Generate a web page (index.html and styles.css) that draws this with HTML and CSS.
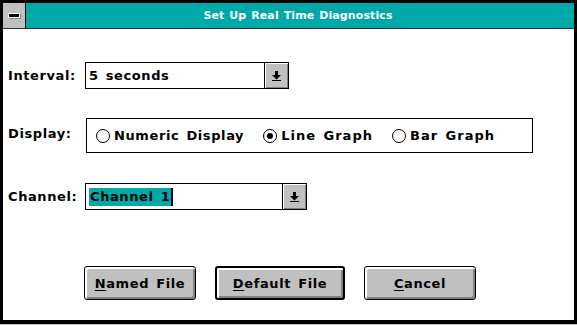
FILE: index.html
```html
<!DOCTYPE html>
<html>
<head>
<meta charset="utf-8">
<link rel="stylesheet" href="styles.css">
</head>
<body>
<div class="window">
  <div class="titlebar">
    <div class="sysbox"><span class="sysbar"></span></div>
    <div class="title">Set Up Real Time Diagnostics</div>
  </div>
  <div class="client">
    <div class="row row-interval">
      <span class="label">Interval:</span>
      <div class="combo combo-interval">
        <span class="combo-text">5 seconds</span>
        <span class="drop">
          <svg width="9" height="10" viewBox="0 0 9 10"><path d="M3 0h3v4h3L4.5 8.5 0 4h3z" fill="#000"/><rect x="0" y="9" width="9" height="1" fill="#000"/></svg>
        </span>
      </div>
    </div>
    <div class="row row-display">
      <span class="label">Display:</span>
      <div class="group">
        <span class="radio"><span class="circle"></span>Numeric Display</span>
        <span class="radio"><span class="circle on"></span>Line Graph</span>
        <span class="radio"><span class="circle"></span>Bar Graph</span>
      </div>
    </div>
    <div class="row row-channel">
      <span class="label">Channel:</span>
      <div class="combo combo-channel">
        <span class="combo-text"><span class="sel">Channel 1</span><span class="caret"></span></span>
        <span class="drop">
          <svg width="9" height="10" viewBox="0 0 9 10"><path d="M3 0h3v4h3L4.5 8.5 0 4h3z" fill="#000"/><rect x="0" y="9" width="9" height="1" fill="#000"/></svg>
        </span>
      </div>
    </div>
    <div class="buttons">
      <div class="btn btn-named"><span><u>N</u>amed File</span></div>
      <div class="btn btn-default"><span><u>D</u>efault File</span></div>
      <div class="btn btn-cancel"><span><u>C</u>ancel</span></div>
    </div>
  </div>
</div>
</body>
</html>
```
FILE: styles.css
```css
html, body {
  margin: 0;
  padding: 0;
  background: #c0c0c0;
}
body {
  width: 577px;
  height: 325px;
  overflow: hidden;
  font-family: "DejaVu Sans", sans-serif;
  font-weight: bold;
  font-size: 13px;
  letter-spacing: 0.6px;
  word-spacing: 2px;
  color: #000;
}
.window {
  width: 571px;
  height: 317px;
  border: 3px solid #000;
  border-bottom-width: 4px;
  border-right-width: 4px;
  background: #fff;
  display: flex;
  flex-direction: column;
}
.titlebar {
  height: 25px;
  display: flex;
  border-bottom: 1px solid #303030;
  background: #00a8a8;
  flex: none;
}
.sysbox {
  width: 22px;
  background: #c0c0c0;
  border-right: 1px solid #000;
  display: flex;
  align-items: center;
  justify-content: center;
}
.sysbar {
  width: 10px;
  height: 3px;
  background: #000;
  border: 1px solid #fff;
  box-shadow: 1px 1px 0 #808080;
}
.title {
  flex: 1;
  color: #fff;
  text-align: center;
  line-height: 25px;
  font-size: 11px;
  letter-spacing: 0.1px;
  word-spacing: 1px;
  padding-right: 4px;
}
.client {
  flex: 1;
  display: flex;
  flex-direction: column;
  padding-left: 5px;
}
.row {
  display: flex;
  align-items: center;
}
.label {
  width: 77px;
  flex: none;
}
.row-interval { margin-top: 33px; }
.row-display { margin-top: 29px; }
.row-channel { margin-top: 30px; }
.row-display .label { align-self: flex-start; margin-top: 8px; }
.combo {
  height: 25px;
  border: 1px solid #000;
  display: flex;
  background: #fff;
}
.combo-interval { width: 202px; }
.combo-channel { width: 220px; }
.combo-text {
  flex: 1;
  display: flex;
  align-items: center;
  padding-left: 3px;
}
.sel {
  background: #00a8a8;
  height: 18px;
  line-height: 18px;
  padding: 0 1px;
}
.caret {
  width: 2px;
  height: 18px;
  background: #000;
}
.drop {
  width: 23px;
  border-left: 1px solid #000;
  background: #c0c0c0;
  box-shadow: inset 1px 1px 0 #fff, inset -1px -1px 0 #808080;
  display: flex;
  align-items: center;
  justify-content: center;
}
.group {
  width: 436px;
  height: 33px;
  margin-left: 1px;
  border: 1px solid #000;
  display: flex;
  align-items: center;
  padding-left: 9px;
  box-sizing: content-box;
}
.radio {
  display: flex;
  align-items: center;
  margin-right: 19px;
}
.radio-label { display: inline; }
.radio:nth-child(2), .radio:nth-child(3) { letter-spacing: 1px; }
.circle {
  width: 14px;
  height: 14px;
  border: 1px solid #000;
  border-radius: 50%;
  margin-right: 4px;
  box-sizing: border-box;
  display: flex;
  align-items: center;
  justify-content: center;
}
.circle.on::after {
  content: "";
  width: 6px;
  height: 6px;
  border-radius: 50%;
  background: #000;
}
.buttons {
  display: flex;
  margin-top: 56px;
  padding-left: 76px;
  gap: 19px;
}
.btn {
  height: 34px;
  box-sizing: border-box;
  border: 1px solid #000;
  border-radius: 3px;
  background: #c0c0c0;
  box-shadow: inset 2px 2px 0 #fff, inset -2px -2px 0 #808080;
  display: flex;
  align-items: center;
  justify-content: center;
}
.btn-named, .btn-cancel { width: 112px; }
.btn-default {
  width: 130px;
  border-width: 2px;
}
.btn u { text-decoration-thickness: 1px; text-underline-offset: 2px; }
```
